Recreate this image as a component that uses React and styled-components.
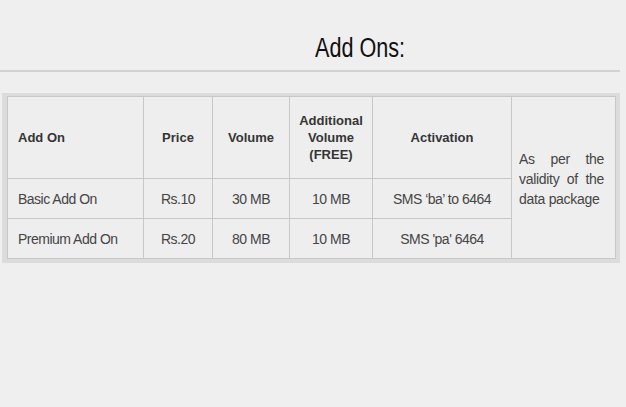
import React from "react";
import styled, {createGlobalStyle} from "styled-components";

const Global = createGlobalStyle`
    html, body {
        margin: 0;
        padding: 0;
        background: #efefef;
    }
    body {
        font-family: "Liberation Sans", Arial, sans-serif;
    }
`;

const Page = styled.div`
    width: 626px;
    height: 407px;
    background: #efefef;
    padding-top: 33px;
    box-sizing: border-box;
`;

const Title = styled.h2`
    display: inline-block;
    margin: 0 0 0 315px;
    font-size: 27px;
    font-weight: 400;
    line-height: 30px;
    color: #111;
    transform: scaleX(0.8);
    transform-origin: left center;
`;

const Rule = styled.hr`
    margin: 7px 6px 0 0;
    border: 0;
    height: 2px;
    background: #d2d2d2;
`;

const Frame = styled.div`
    margin: 21px 0 0 2px;
    width: 618px;
    padding: 3px 5px 4px 5px;
    box-sizing: border-box;
    background: #dcdcdc;
`;

const Table = styled.table`
    width: 608px;
    border-collapse: collapse;
    background: #eeeeee;
    table-layout: fixed;
`;

const Th = styled.th`
    height: 81px;
    border: 1px solid #c8c8c8;
    font-size: 13px;
    font-weight: 700;
    color: #353535;
    line-height: 17px;
    text-align: ${p => p.$left ? "left" : "center"};
    padding: ${p => p.$left ? "0 0 0 10px" : "0 6px"};
`;

const Td = styled.td`
    height: 39px;
    border: 1px solid #c8c8c8;
    font-size: 14px;
    letter-spacing: -0.5px;
    color: #454545;
    text-align: ${p => p.$left ? "left" : "center"};
    padding: ${p => p.$left ? "0 0 0 10px" : "0"};
`;

const Note = styled.td`
    border: 1px solid #c8c8c8;
    font-size: 14px;
    letter-spacing: -0.3px;
    color: #454545;
    line-height: 20px;
    text-align: justify;
    text-align-last: left;
    padding: 3px 11px 0 7px;
    vertical-align: middle;
`;

const rows = [
    {name: "Basic Add On", price: "Rs.10", volume: "30 MB", free: "10 MB", act: "SMS ‘ba’ to 6464"},
    {name: "Premium Add On", price: "Rs.20", volume: "80 MB", free: "10 MB", act: "SMS 'pa' 6464"},
];

function App() {
    return (
        <Page>
            <Global/>
            <Title>Add Ons:</Title>
            <Rule/>
            <Frame>
                <Table>
                    <colgroup>
                        <col style={{width: 136}}/>
                        <col style={{width: 69}}/>
                        <col style={{width: 77}}/>
                        <col style={{width: 83}}/>
                        <col style={{width: 139}}/>
                        <col style={{width: 104}}/>
                    </colgroup>
                    <tbody>
                        <tr>
                            <Th $left>Add On</Th>
                            <Th>Price</Th>
                            <Th>Volume</Th>
                            <Th>Additional Volume (FREE)</Th>
                            <Th>Activation</Th>
                            <Note rowSpan={3}>As per the validity of the data package</Note>
                        </tr>
                        {rows.map(r => (
                            <tr key={r.name}>
                                <Td $left>{r.name}</Td>
                                <Td>{r.price}</Td>
                                <Td>{r.volume}</Td>
                                <Td>{r.free}</Td>
                                <Td>{r.act}</Td>
                            </tr>
                        ))}
                    </tbody>
                </Table>
            </Frame>
        </Page>
    );
}

export default App;
